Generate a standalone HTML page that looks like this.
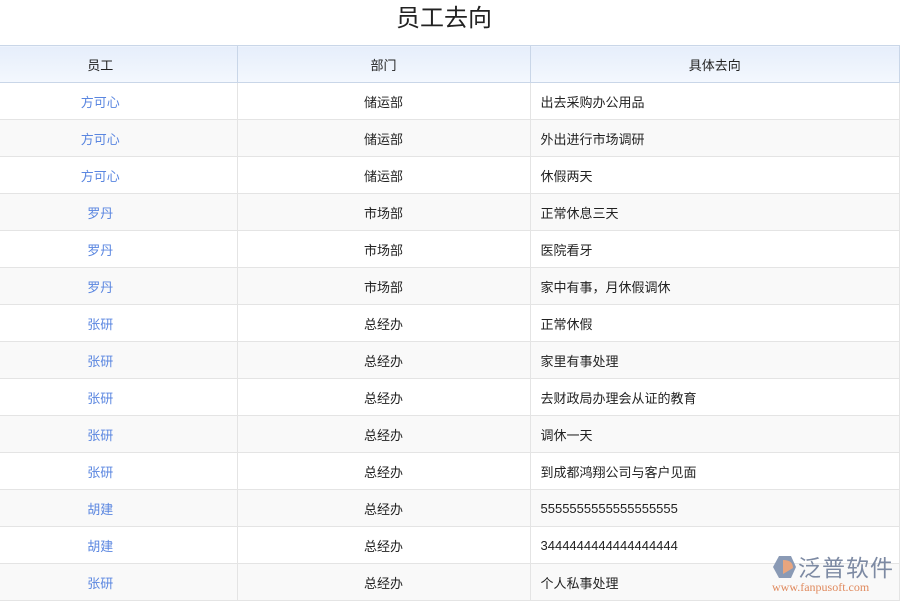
<!DOCTYPE html>
<html><head><meta charset="utf-8"><style>
body{margin:0;width:900px;height:600px;overflow:hidden;background:#fff;font-family:"Liberation Sans","Noto Sans CJK SC",sans-serif;}
.t{position:absolute;top:1px;left:-6px;width:900px;text-align:center;font-size:24px;line-height:36px;color:#222;}
table{position:absolute;top:45px;left:0;width:900px;border-collapse:collapse;table-layout:fixed;font-size:13px;color:#222;}
td,th{height:36px;padding:0;border-bottom:1px solid #e4e4e4;border-right:1px solid #e4e4e4;}
th{font-weight:normal;background:linear-gradient(#e6eefb,#f4f8fe);border-top:1px solid #c9d6e8;border-bottom:1px solid #c9d6e8;border-right-color:#c9d6e8;}
tr>*:first-child{padding-right:36px;}
td:first-child{color:#5a86e0;text-align:center;}
td:nth-child(2){text-align:center;}
td:nth-child(3){padding-left:10px;}
tr:nth-child(odd) td{background:#f9f9f9;}
.logo{position:absolute;left:770px;top:552px;width:125px;height:44px;}
</style></head><body>
<div class="t">员工去向</div>
<table>
<colgroup><col style="width:237px"><col style="width:293px"><col></colgroup>
<tr><th>员工</th><th>部门</th><th style="text-align:center">具体去向</th></tr>
<tr><td>方可心</td><td>储运部</td><td>出去采购办公用品</td></tr>
<tr><td>方可心</td><td>储运部</td><td>外出进行市场调研</td></tr>
<tr><td>方可心</td><td>储运部</td><td>休假两天</td></tr>
<tr><td>罗丹</td><td>市场部</td><td>正常休息三天</td></tr>
<tr><td>罗丹</td><td>市场部</td><td>医院看牙</td></tr>
<tr><td>罗丹</td><td>市场部</td><td>家中有事，月休假调休</td></tr>
<tr><td>张研</td><td>总经办</td><td>正常休假</td></tr>
<tr><td>张研</td><td>总经办</td><td>家里有事处理</td></tr>
<tr><td>张研</td><td>总经办</td><td>去财政局办理会从证的教育</td></tr>
<tr><td>张研</td><td>总经办</td><td>调休一天</td></tr>
<tr><td>张研</td><td>总经办</td><td>到成都鸿翔公司与客户见面</td></tr>
<tr><td>胡建</td><td>总经办</td><td>5555555555555555555</td></tr>
<tr><td>胡建</td><td>总经办</td><td>3444444444444444444</td></tr>
<tr><td>张研</td><td>总经办</td><td>个人私事处理</td></tr>
</table>
<div class="logo">
<svg width="26" height="26" viewBox="0 0 26 26" style="position:absolute;left:1px;top:2px"><path d="M8 2 L20 2 L25 13 L20 24 L8 24 L2 13Z" fill="#8a9ab5"/><path d="M12 6 Q22 6 22 14 L12 20Z" fill="#e8a57e"/></svg>
<div style="position:absolute;left:28px;top:0;font-size:23px;line-height:28px;color:#7d8aa3;letter-spacing:1px;font-family:'Noto Sans CJK SC',sans-serif">泛普软件</div>
<div style="position:absolute;left:2px;top:29px;font-size:12px;line-height:12px;color:#e08a5e;font-family:'Liberation Serif',serif">www.fanpusoft.com</div>
</div>
</body></html>
